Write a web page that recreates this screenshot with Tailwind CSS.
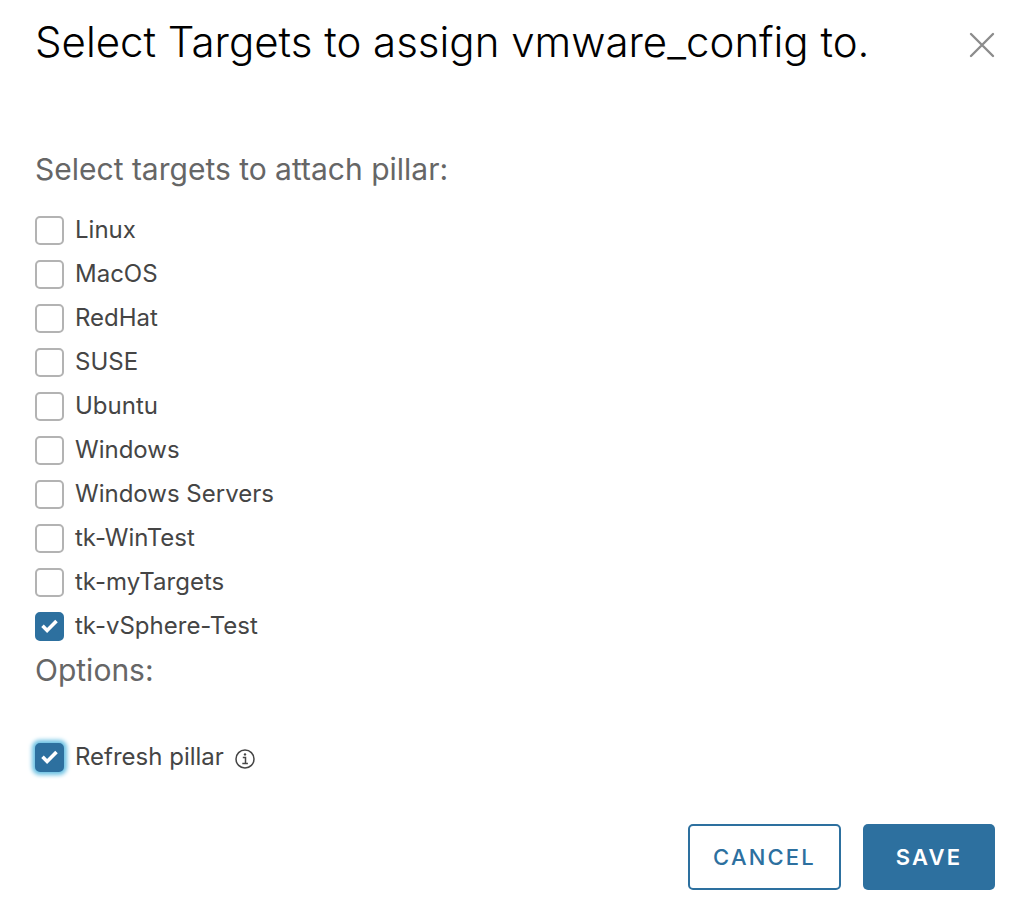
<!DOCTYPE html>
<html lang="en">
<head>
    <meta charset="UTF-8" />
    <meta name="viewport" content="width=device-width, initial-scale=1.0"/>
    <title>Select Targets</title>
    <script src="https://cdn.jsdelivr.net/npm/@tailwindcss/browser@4"></script>
</head>
<body class="bg-white font-['Inter',sans-serif] text-[#454545]">
    <form class="flex flex-col min-h-screen pl-[35px] pr-[29px] pt-4 pb-[26px]">
        <header class="flex items-start justify-between">
            <h1 class="text-[42px] leading-[52px] font-light text-black">Select Targets to assign vmware_config to.</h1>
            <button type="button" aria-label="Close" class="mt-4 text-[#8c8c8c]">
                <svg class="block w-[26px] h-[26px]" viewBox="0 0 26 26" fill="none" stroke="currentColor" stroke-width="2.4" stroke-linecap="round"><path d="M2 2l22 22M24 2L2 24"/></svg>
            </button>
        </header>

        <h2 class="mt-[79px] text-[30px] leading-11 text-[#666666]">Select targets to attach pillar:</h2>

        <div id="targets" class="mt-[17px] flex flex-col"></div>

        <h2 class="text-[30px] leading-11 text-[#666666]">Options:</h2>

        <div class="mt-[43px] flex items-center">
            <label class="flex h-11 items-center gap-[11px] text-2xl">
                <span class="grid">
                    <input type="checkbox" name="refresh" checked class="peer col-start-1 row-start-1 appearance-none size-[29px] rounded-[5px] border-2 border-[#b3b3b3] checked:border-[#2d709f] checked:bg-[#2d709f] shadow-[0_0_4px_3px_#6bc1e3] outline-none" />
                    <svg class="col-start-1 row-start-1 size-[29px] invisible peer-checked:visible pointer-events-none" viewBox="0 0 29 29" fill="none" stroke="#fff" stroke-width="3.6"><path d="M7.5 13.8l4.6 4.6 9.4-9.4"/></svg>
                </span>
                Refresh pillar
            </label>
            <button type="button" aria-label="About refresh pillar" class="ml-[11px] mt-1">
                <svg class="block size-5" viewBox="0 0 20 20" fill="none" stroke="#454545" stroke-width="1.5"><circle cx="10" cy="10" r="9"/><path d="M7.8 8.5h2.7v6M7.3 14.5h5.6"/><circle cx="10" cy="5.4" r="1.2" fill="#454545" stroke="none"/></svg>
            </button>
        </div>

        <footer class="mt-auto flex justify-end gap-[22px] text-[22px] tracking-widest">
            <button type="button" class="h-[66px] w-[153px] rounded-[5px] border-2 border-[#2d709f] font-medium text-[#2d709f]">CANCEL</button>
            <button type="submit" class="h-[66px] w-[132px] rounded-[5px] bg-[#2d709f] font-semibold text-white">SAVE</button>
        </footer>
    </form>

    <script>
        const targets = ["Linux", "MacOS", "RedHat", "SUSE", "Ubuntu", "Windows", "Windows Servers", "tk-WinTest", "tk-myTargets", "tk-vSphere-Test"];
        const selected = ["tk-vSphere-Test"];

        document.getElementById("targets").innerHTML = targets.map(name => `
            <label class="flex h-11 items-center gap-[11px] text-2xl">
                <span class="grid">
                    <input type="checkbox" name="target" value="${name}" ${selected.includes(name) ? "checked" : ""} class="peer col-start-1 row-start-1 appearance-none size-[29px] rounded-[5px] border-2 border-[#b3b3b3] checked:border-[#2d709f] checked:bg-[#2d709f]" />
                    <svg class="col-start-1 row-start-1 size-[29px] invisible peer-checked:visible pointer-events-none" viewBox="0 0 29 29" fill="none" stroke="#fff" stroke-width="3.6"><path d="M7.5 13.8l4.6 4.6 9.4-9.4"/></svg>
                </span>
                ${name}
            </label>`).join("");
    </script>
</body>
</html>
